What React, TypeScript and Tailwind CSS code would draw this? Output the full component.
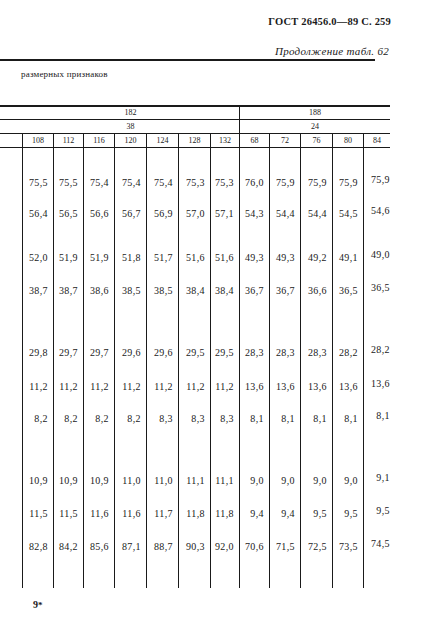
const cols = [
  { w: "w-[31px]", h: "108" },
  { w: "w-[30px]", h: "112" },
  { w: "w-[31px]", h: "116" },
  { w: "w-[32px]", h: "120" },
  { w: "w-[32px]", h: "124" },
  { w: "w-[32px]", h: "128" },
  { w: "w-[29px]", h: "132" },
  { w: "w-[30px]", h: "68" },
  { w: "w-[31px]", h: "72" },
  { w: "w-[32px]", h: "76" },
  { w: "w-[31px]", h: "80" },
  { w: "w-[27px]", h: "84" },
];

const rows = [
  ["75,5", "75,5", "75,4", "75,4", "75,4", "75,3", "75,3", "76,0", "75,9", "75,9", "75,9", "75,9"],
  ["56,4", "56,5", "56,6", "56,7", "56,9", "57,0", "57,1", "54,3", "54,4", "54,4", "54,5", "54,6"],
  ["52,0", "51,9", "51,9", "51,8", "51,7", "51,6", "51,6", "49,3", "49,3", "49,2", "49,1", "49,0"],
  ["38,7", "38,7", "38,6", "38,5", "38,5", "38,4", "38,4", "36,7", "36,7", "36,6", "36,5", "36,5"],
  ["29,8", "29,7", "29,7", "29,6", "29,6", "29,5", "29,5", "28,3", "28,3", "28,3", "28,2", "28,2"],
  ["11,2", "11,2", "11,2", "11,2", "11,2", "11,2", "11,2", "13,6", "13,6", "13,6", "13,6", "13,6"],
  ["8,2", "8,2", "8,2", "8,2", "8,3", "8,3", "8,3", "8,1", "8,1", "8,1", "8,1", "8,1"],
  ["10,9", "10,9", "10,9", "11,0", "11,0", "11,1", "11,1", "9,0", "9,0", "9,0", "9,0", "9,1"],
  ["11,5", "11,5", "11,6", "11,6", "11,7", "11,8", "11,8", "9,4", "9,4", "9,5", "9,5", "9,5"],
  ["82,8", "84,2", "85,6", "87,1", "88,7", "90,3", "92,0", "70,6", "71,5", "72,5", "73,5", "74,5"],
];

// gap above each row (body starts right under the header rule)
const gaps = [
  "mt-[29px]",
  "mt-[19px]",
  "mt-[32px]",
  "mt-[21px]",
  "mt-[50px]",
  "mt-[22px]",
  "mt-[20px]",
  "mt-[50px]",
  "mt-[21px]",
  "mt-[21px]",
];

export default function App() {
  return (
    <div className="w-[424px] h-[632px] bg-white overflow-hidden text-[#1a1a1a] font-['Liberation_Serif',serif]">
      <div className="flex flex-col items-end pr-[33px] pt-[16px]">
        <div className="text-[10.5px] leading-[12px] font-bold tracking-[0.2px]">ГОСТ 26456.0—89 С. 259</div>
        <div className="mt-[17px] mr-[2px] text-[11px] leading-[12px] italic tracking-[0.3px]">Продолжение табл. 62</div>
      </div>
      <div className="mt-[2px] w-[375px] h-[2px] bg-[#1a1a1a]" />
      <div className="mt-[8px] pl-[21px] text-[9px] leading-[10px] tracking-[0.2px]">размерных признаков</div>

      <div className="mt-[26px] w-[390px] border-t-2 border-[#1a1a1a] text-[8px] leading-[10px]">
        <div className="flex h-[13px] border-b border-[#1a1a1a]">
          <div className="w-[22px]" />
          <div className="w-[217px] flex items-center justify-center">182</div>
          <div className="w-[151px] border-l border-[#1a1a1a] flex items-center justify-center">188</div>
        </div>
        <div className="flex h-[14px] border-b border-[#1a1a1a]">
          <div className="w-[22px]" />
          <div className="w-[217px] flex items-center justify-center">38</div>
          <div className="w-[151px] border-l border-[#1a1a1a] flex items-center justify-center">24</div>
        </div>
        <div className="flex h-[14px] border-b border-[#1a1a1a]">
          <div className="w-[22px]" />
          {cols.map((c) => (
            <div key={c.h} className={`${c.w} border-l border-[#1a1a1a] flex items-center justify-center`}>
              {c.h}
            </div>
          ))}
        </div>

        <div className="flex h-[440px] text-[10px] leading-[12px] tracking-[0.4px]">
          <div className="w-[22px]" />
          {cols.map((c, ci) => {
            const last = ci === cols.length - 1;
            return (
              <div
                key={c.h}
                className={`${c.w} border-l border-[#1a1a1a] flex flex-col items-end ${last ? "pr-0" : "pr-[5px]"}`}
              >
                {rows.map((r, ri) => (
                  <div
                    key={ri}
                    className={`${last && ri === 0 ? "mt-[26px]" : gaps[ri]} h-[12px] whitespace-nowrap`}
                  >
                    {r[ci]}
                  </div>
                ))}
              </div>
            );
          })}
        </div>
      </div>

      <div className="mt-[11px] pl-[33px] text-[10px] leading-[12px] font-bold">
        9<span className="text-[9px]">*</span>
      </div>
    </div>
  );
}
